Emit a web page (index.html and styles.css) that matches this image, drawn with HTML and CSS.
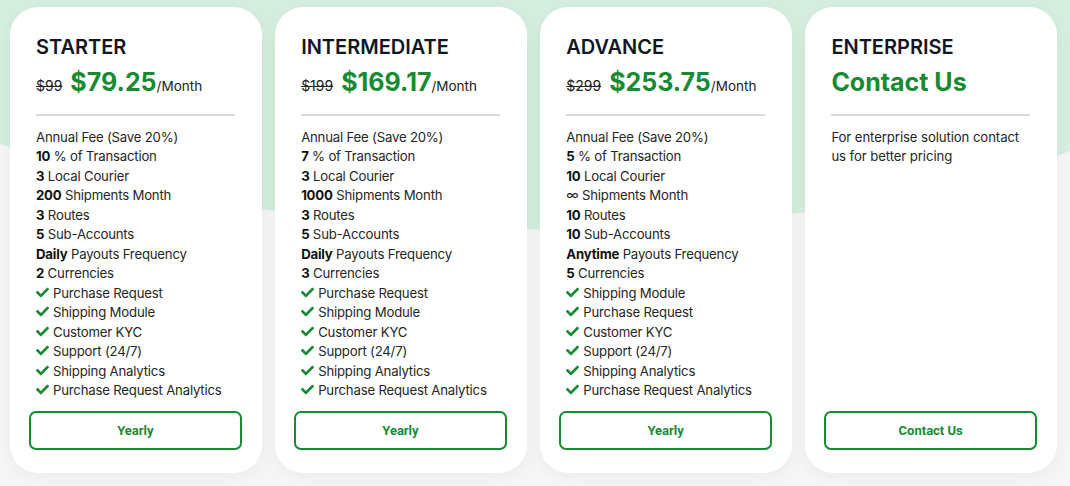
FILE: index.html
```html
<!DOCTYPE html>
<html lang="en">
<head>
  <meta charset="UTF-8">
  <meta name="viewport" content="width=device-width, initial-scale=1.0">
  <title>Pricing</title>
  <link rel="stylesheet" href="styles.css">
</head>
<body>
  <div class="pricing">
    <div class="plans">

      <div class="card">
        <div class="card-body">
          <h2 class="plan-name">STARTER</h2>
          <div class="price-row">
            <span class="old">$99</span>
            <span class="now">$79.25</span>
            <span class="per">/Month</span>
          </div>
          <div class="divider"></div>
          <ul class="features">
            <li>Annual Fee (Save 20%)</li>
            <li><b>10</b> % of Transaction</li>
            <li><b>3</b> Local Courier</li>
            <li><b>200</b> Shipments Month</li>
            <li><b>3</b> Routes</li>
            <li><b>5</b> Sub-Accounts</li>
            <li><b>Daily</b> Payouts Frequency</li>
            <li><b>2</b> Currencies</li>
            <li class="check"><svg viewBox="0 0 512 512"><path d="M173.9 439.4l-166.4-166.4c-10-10-10-26.2 0-36.2l36.2-36.2c10-10 26.2-10 36.2 0L192 312.7 432.1 72.6c10-10 26.2-10 36.2 0l36.2 36.2c10 10 10 26.2 0 36.2l-294.4 294.4c-10 10-26.2 10-36.2 0z"/></svg>Purchase Request</li>
            <li class="check"><svg viewBox="0 0 512 512"><path d="M173.9 439.4l-166.4-166.4c-10-10-10-26.2 0-36.2l36.2-36.2c10-10 26.2-10 36.2 0L192 312.7 432.1 72.6c10-10 26.2-10 36.2 0l36.2 36.2c10 10 10 26.2 0 36.2l-294.4 294.4c-10 10-26.2 10-36.2 0z"/></svg>Shipping Module</li>
            <li class="check"><svg viewBox="0 0 512 512"><path d="M173.9 439.4l-166.4-166.4c-10-10-10-26.2 0-36.2l36.2-36.2c10-10 26.2-10 36.2 0L192 312.7 432.1 72.6c10-10 26.2-10 36.2 0l36.2 36.2c10 10 10 26.2 0 36.2l-294.4 294.4c-10 10-26.2 10-36.2 0z"/></svg>Customer KYC</li>
            <li class="check"><svg viewBox="0 0 512 512"><path d="M173.9 439.4l-166.4-166.4c-10-10-10-26.2 0-36.2l36.2-36.2c10-10 26.2-10 36.2 0L192 312.7 432.1 72.6c10-10 26.2-10 36.2 0l36.2 36.2c10 10 10 26.2 0 36.2l-294.4 294.4c-10 10-26.2 10-36.2 0z"/></svg>Support (24/7)</li>
            <li class="check"><svg viewBox="0 0 512 512"><path d="M173.9 439.4l-166.4-166.4c-10-10-10-26.2 0-36.2l36.2-36.2c10-10 26.2-10 36.2 0L192 312.7 432.1 72.6c10-10 26.2-10 36.2 0l36.2 36.2c10 10 10 26.2 0 36.2l-294.4 294.4c-10 10-26.2 10-36.2 0z"/></svg>Shipping Analytics</li>
            <li class="check"><svg viewBox="0 0 512 512"><path d="M173.9 439.4l-166.4-166.4c-10-10-10-26.2 0-36.2l36.2-36.2c10-10 26.2-10 36.2 0L192 312.7 432.1 72.6c10-10 26.2-10 36.2 0l36.2 36.2c10 10 10 26.2 0 36.2l-294.4 294.4c-10 10-26.2 10-36.2 0z"/></svg>Purchase Request Analytics</li>
          </ul>
        </div>
        <button class="plan-btn">Yearly</button>
      </div>

      <div class="card">
        <div class="card-body">
          <h2 class="plan-name">INTERMEDIATE</h2>
          <div class="price-row">
            <span class="old">$199</span>
            <span class="now">$169.17</span>
            <span class="per">/Month</span>
          </div>
          <div class="divider"></div>
          <ul class="features">
            <li>Annual Fee (Save 20%)</li>
            <li><b>7</b> % of Transaction</li>
            <li><b>3</b> Local Courier</li>
            <li><b>1000</b> Shipments Month</li>
            <li><b>3</b> Routes</li>
            <li><b>5</b> Sub-Accounts</li>
            <li><b>Daily</b> Payouts Frequency</li>
            <li><b>3</b> Currencies</li>
            <li class="check"><svg viewBox="0 0 512 512"><path d="M173.9 439.4l-166.4-166.4c-10-10-10-26.2 0-36.2l36.2-36.2c10-10 26.2-10 36.2 0L192 312.7 432.1 72.6c10-10 26.2-10 36.2 0l36.2 36.2c10 10 10 26.2 0 36.2l-294.4 294.4c-10 10-26.2 10-36.2 0z"/></svg>Purchase Request</li>
            <li class="check"><svg viewBox="0 0 512 512"><path d="M173.9 439.4l-166.4-166.4c-10-10-10-26.2 0-36.2l36.2-36.2c10-10 26.2-10 36.2 0L192 312.7 432.1 72.6c10-10 26.2-10 36.2 0l36.2 36.2c10 10 10 26.2 0 36.2l-294.4 294.4c-10 10-26.2 10-36.2 0z"/></svg>Shipping Module</li>
            <li class="check"><svg viewBox="0 0 512 512"><path d="M173.9 439.4l-166.4-166.4c-10-10-10-26.2 0-36.2l36.2-36.2c10-10 26.2-10 36.2 0L192 312.7 432.1 72.6c10-10 26.2-10 36.2 0l36.2 36.2c10 10 10 26.2 0 36.2l-294.4 294.4c-10 10-26.2 10-36.2 0z"/></svg>Customer KYC</li>
            <li class="check"><svg viewBox="0 0 512 512"><path d="M173.9 439.4l-166.4-166.4c-10-10-10-26.2 0-36.2l36.2-36.2c10-10 26.2-10 36.2 0L192 312.7 432.1 72.6c10-10 26.2-10 36.2 0l36.2 36.2c10 10 10 26.2 0 36.2l-294.4 294.4c-10 10-26.2 10-36.2 0z"/></svg>Support (24/7)</li>
            <li class="check"><svg viewBox="0 0 512 512"><path d="M173.9 439.4l-166.4-166.4c-10-10-10-26.2 0-36.2l36.2-36.2c10-10 26.2-10 36.2 0L192 312.7 432.1 72.6c10-10 26.2-10 36.2 0l36.2 36.2c10 10 10 26.2 0 36.2l-294.4 294.4c-10 10-26.2 10-36.2 0z"/></svg>Shipping Analytics</li>
            <li class="check"><svg viewBox="0 0 512 512"><path d="M173.9 439.4l-166.4-166.4c-10-10-10-26.2 0-36.2l36.2-36.2c10-10 26.2-10 36.2 0L192 312.7 432.1 72.6c10-10 26.2-10 36.2 0l36.2 36.2c10 10 10 26.2 0 36.2l-294.4 294.4c-10 10-26.2 10-36.2 0z"/></svg>Purchase Request Analytics</li>
          </ul>
        </div>
        <button class="plan-btn">Yearly</button>
      </div>

      <div class="card">
        <div class="card-body">
          <h2 class="plan-name">ADVANCE</h2>
          <div class="price-row">
            <span class="old">$299</span>
            <span class="now">$253.75</span>
            <span class="per">/Month</span>
          </div>
          <div class="divider"></div>
          <ul class="features">
            <li>Annual Fee (Save 20%)</li>
            <li><b>5</b> % of Transaction</li>
            <li><b>10</b> Local Courier</li>
            <li>&infin; Shipments Month</li>
            <li><b>10</b> Routes</li>
            <li><b>10</b> Sub-Accounts</li>
            <li><b>Anytime</b> Payouts Frequency</li>
            <li><b>5</b> Currencies</li>
            <li class="check"><svg viewBox="0 0 512 512"><path d="M173.9 439.4l-166.4-166.4c-10-10-10-26.2 0-36.2l36.2-36.2c10-10 26.2-10 36.2 0L192 312.7 432.1 72.6c10-10 26.2-10 36.2 0l36.2 36.2c10 10 10 26.2 0 36.2l-294.4 294.4c-10 10-26.2 10-36.2 0z"/></svg>Shipping Module</li>
            <li class="check"><svg viewBox="0 0 512 512"><path d="M173.9 439.4l-166.4-166.4c-10-10-10-26.2 0-36.2l36.2-36.2c10-10 26.2-10 36.2 0L192 312.7 432.1 72.6c10-10 26.2-10 36.2 0l36.2 36.2c10 10 10 26.2 0 36.2l-294.4 294.4c-10 10-26.2 10-36.2 0z"/></svg>Purchase Request</li>
            <li class="check"><svg viewBox="0 0 512 512"><path d="M173.9 439.4l-166.4-166.4c-10-10-10-26.2 0-36.2l36.2-36.2c10-10 26.2-10 36.2 0L192 312.7 432.1 72.6c10-10 26.2-10 36.2 0l36.2 36.2c10 10 10 26.2 0 36.2l-294.4 294.4c-10 10-26.2 10-36.2 0z"/></svg>Customer KYC</li>
            <li class="check"><svg viewBox="0 0 512 512"><path d="M173.9 439.4l-166.4-166.4c-10-10-10-26.2 0-36.2l36.2-36.2c10-10 26.2-10 36.2 0L192 312.7 432.1 72.6c10-10 26.2-10 36.2 0l36.2 36.2c10 10 10 26.2 0 36.2l-294.4 294.4c-10 10-26.2 10-36.2 0z"/></svg>Support (24/7)</li>
            <li class="check"><svg viewBox="0 0 512 512"><path d="M173.9 439.4l-166.4-166.4c-10-10-10-26.2 0-36.2l36.2-36.2c10-10 26.2-10 36.2 0L192 312.7 432.1 72.6c10-10 26.2-10 36.2 0l36.2 36.2c10 10 10 26.2 0 36.2l-294.4 294.4c-10 10-26.2 10-36.2 0z"/></svg>Shipping Analytics</li>
            <li class="check"><svg viewBox="0 0 512 512"><path d="M173.9 439.4l-166.4-166.4c-10-10-10-26.2 0-36.2l36.2-36.2c10-10 26.2-10 36.2 0L192 312.7 432.1 72.6c10-10 26.2-10 36.2 0l36.2 36.2c10 10 10 26.2 0 36.2l-294.4 294.4c-10 10-26.2 10-36.2 0z"/></svg>Purchase Request Analytics</li>
          </ul>
        </div>
        <button class="plan-btn">Yearly</button>
      </div>

      <div class="card">
        <div class="card-body">
          <h2 class="plan-name">ENTERPRISE</h2>
          <div class="price-row">
            <span class="now contact">Contact Us</span>
          </div>
          <div class="divider"></div>
          <p class="note">For enterprise solution contact us for better pricing</p>
        </div>
        <button class="plan-btn">Contact Us</button>
      </div>

    </div>
  </div>
</body>
</html>
```

FILE: styles.css
```css
body {
  margin: 0;
  font-family: Inter, "Liberation Sans", Arial, sans-serif;
  color: #1f2328;
  background-color: #f6f6f6;
}
.pricing {
  min-height: 486px;
  background: radial-gradient(ellipse 780px 300px at 545px -70px, #d5eedf 99.6%, #f6f6f6 100%);
}
.plans {
  display: grid;
  grid-template-columns: repeat(4, 1fr);
  gap: 13.5px;
  padding: 7px 13px 12px 10px;
}
.card {
  display: flex;
  flex-direction: column;
  height: 466px;
  box-sizing: border-box;
  padding: 28px 20px 23px 19px;
  background-color: #fff;
  border-radius: 28px;
  box-shadow: 0 4px 18px rgba(0, 0, 0, 0.05);
}
.card-body {
  padding: 0 7px;
}
.plan-name {
  margin: 0;
  font-size: 20px;
  line-height: 24px;
  font-weight: 600;
  color: #101624;
}
.price-row {
  display: flex;
  align-items: baseline;
  margin-top: 8px;
  height: 34px;
}
.old {
  font-size: 14px;
  text-decoration: line-through;
  color: #222;
  margin-right: 8px;
}
.now {
  font-size: 25px;
  font-weight: 700;
  color: #178a33;
}
.per {
  font-size: 13.5px;
  color: #222;
}
.divider {
  height: 1.5px;
  background-color: #d9d9d9;
  margin: 13px 0 12px;
}
.features {
  list-style: none;
  margin: 0;
  padding: 0;
  font-size: 13.2px;
  letter-spacing: -0.2px;
  line-height: 19.5px;
  color: #262626;
}
.features b {
  font-weight: 700;
  color: #111;
}
.check svg {
  width: 13px;
  height: 13px;
  fill: #178a33;
  margin-right: 4px;
  vertical-align: -1px;
}
.note {
  margin: 0;
  font-size: 13.2px;
  letter-spacing: -0.1px;
  line-height: 19.5px;
  color: #262626;
}
.plan-btn {
  margin-top: auto;
  height: 39px;
  border: 2px solid #178a33;
  border-radius: 7px;
  background-color: #fff;
  color: #178a33;
  font-family: Roboto, Inter, sans-serif;
  font-size: 13px;
  font-weight: 700;
  cursor: pointer;
}
```
